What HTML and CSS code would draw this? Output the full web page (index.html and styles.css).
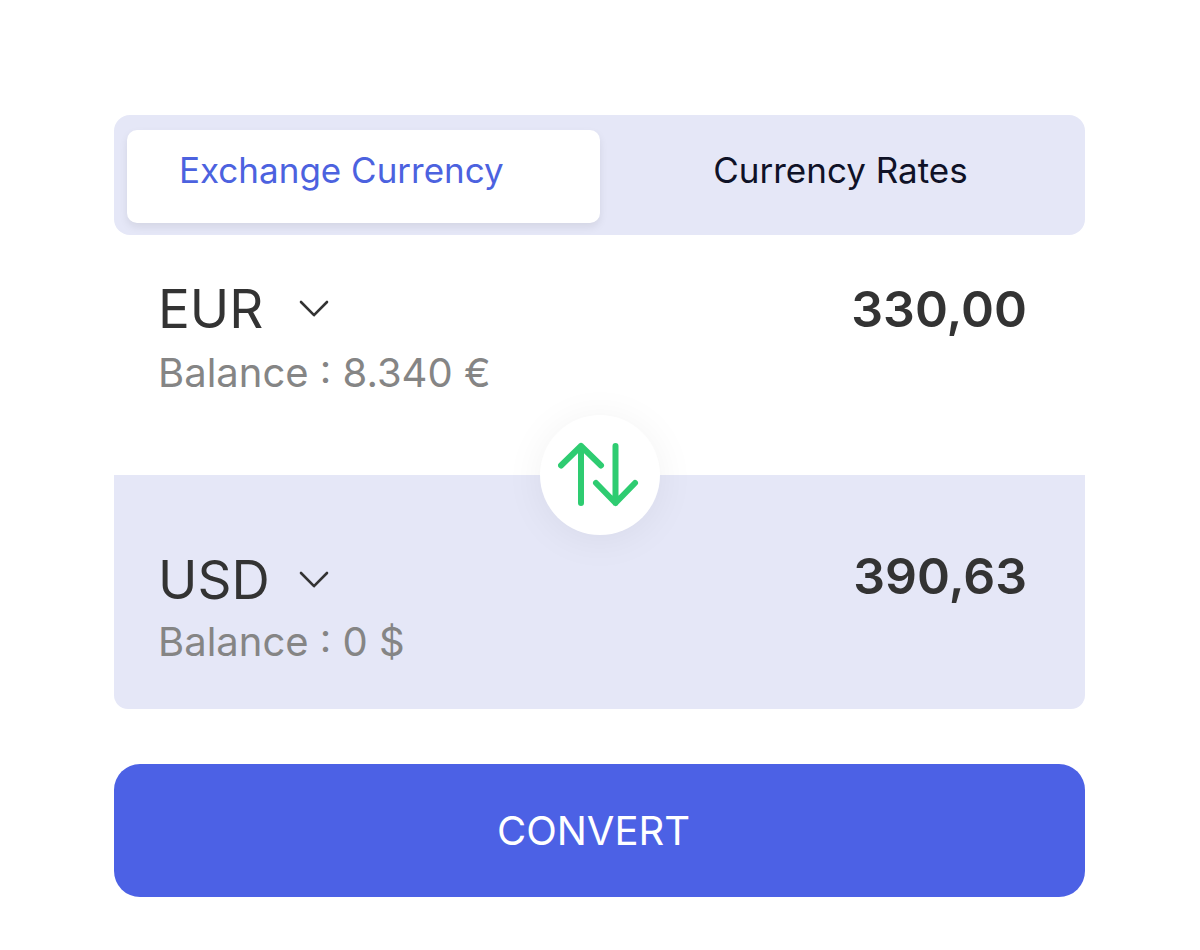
FILE: index.html
```html
<!DOCTYPE html>
<html lang="en">
<head>
<meta charset="utf-8">
<meta name="viewport" content="width=device-width, initial-scale=1">
<title>Exchange Currency</title>
<link rel="stylesheet" href="styles.css">
</head>
<body>
<main class="converter">
  <nav class="tabs" aria-label="Sections">
    <button class="tab tab-active" type="button" aria-current="page">Exchange Currency</button>
    <button class="tab" type="button">Currency Rates</button>
  </nav>
  <form class="form">
    <section class="panel panel-from">
      <div class="account">
        <div class="currency">
          <select class="currency-select" aria-label="From currency"><option>EUR</option></select>
          <svg class="chevron" viewBox="0 0 32 20" aria-hidden="true"><path d="M3 3 16 16.200 29 3"/></svg>
        </div>
        <p class="balance">Balance : 8.340 €</p>
      </div>
      <input class="amount" type="text" inputmode="decimal" value="330,00" aria-label="Amount in EUR">
      <button class="swap" type="button" aria-label="Swap currencies">
        <svg class="swap-icon" viewBox="0 0 84 66" aria-hidden="true"><path d="M23 61V4M3 23.500 23 4 43 23.500M57.500 4V61M38 41 57.500 61 77 41"/></svg>
      </button>
    </section>
    <section class="panel panel-to">
      <div class="account">
        <div class="currency">
          <select class="currency-select" aria-label="To currency"><option>USD</option></select>
          <svg class="chevron" viewBox="0 0 32 20" aria-hidden="true"><path d="M3 3 16 16.200 29 3"/></svg>
        </div>
        <p class="balance">Balance : 0 $</p>
      </div>
      <input class="amount" type="text" inputmode="decimal" value="390,63" aria-label="Amount in USD">
    </section>
    <button class="convert" type="button">CONVERT</button>
  </form>
</main>
</body>
</html>
```
FILE: styles.css
```css
* {
  box-sizing: border-box;
}

body {
  margin: 0;
  background: #fff;
  color: #333;
  font-family: Inter, "Liberation Sans", sans-serif;
}

button,
input,
select {
  margin: 0;
  padding: 0;
  border: 0;
  background: none;
  color: inherit;
  font: inherit;
}

.converter {
  padding: 115px 115px 52px 114px;
}

.tabs {
  display: grid;
  grid-template-columns: 1fr 1fr;
  gap: 4px;
  padding: 15px 8px 12px 13px;
  border-radius: 16px;
  background: #e5e7f7;
}

.tab {
  padding: 16px 52px 29px;
  border-radius: 10px;
  color: #0f1227;
  font-size: 35px;
  line-height: 48px;
  white-space: nowrap;
}

.tab-active {
  background: #fff;
  color: #4c62df;
  text-align: left;
  box-shadow: 0 4px 8px rgba(0, 0, 0, 0.08);
}

.panel {
  position: relative;
  display: flex;
  justify-content: space-between;
  align-items: flex-start;
  padding-left: 44px;
  padding-right: 58px;
}

.panel-from {
  padding-top: 42px;
  padding-bottom: 78px;
  z-index: 1;
}

.panel-to {
  padding-top: 73px;
  padding-bottom: 43px;
  border-radius: 0 0 14px 14px;
  background: #e5e7f7;
}

.account {
  display: flex;
  flex-direction: column;
  gap: 8px;
}

.panel-to .account {
  gap: 6px;
}

.currency {
  display: grid;
  grid-template-columns: 140px 32px;
  align-items: center;
}

.currency-select {
  grid-area: 1 / 1 / 2 / 3;
  width: 100%;
  appearance: none;
  font-size: 53px;
  line-height: 64px;
}

.chevron {
  grid-area: 1 / 2;
  width: 32px;
  height: 20px;
  fill: none;
  stroke: #333;
  stroke-width: 2.6;
  stroke-linecap: round;
  stroke-linejoin: round;
  pointer-events: none;
}

.balance {
  margin: 0;
  color: #858585;
  font-size: 40px;
  line-height: 48px;
}

.amount {
  width: 240px;
  height: 64px;
  font-size: 50px;
  font-weight: 600;
  text-align: right;
}

.panel-to .amount {
  height: 56px;
}

.swap {
  position: absolute;
  left: 50%;
  bottom: 0;
  display: grid;
  place-items: center;
  width: 120px;
  height: 120px;
  border-radius: 50%;
  background: #fff;
  box-shadow: 0 4px 40px rgba(0, 0, 0, 0.06);
  transform: translate(-50%, 50%);
}

.swap-icon {
  width: 84px;
  height: 66px;
  fill: none;
  stroke: #2ecc71;
  stroke-width: 6;
  stroke-linecap: round;
  stroke-linejoin: round;
}

.convert {
  width: 100%;
  margin-top: 55px;
  padding: 43px 12px 42px 0;
  border-radius: 26px;
  background: #4c61e5;
  color: #fff;
  font-size: 40px;
  line-height: 48px;
}
```
